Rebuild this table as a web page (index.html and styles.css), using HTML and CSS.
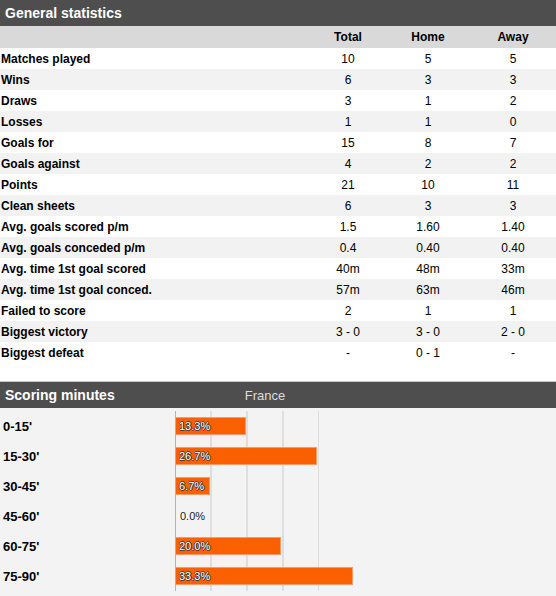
FILE: index.html
```html
<!DOCTYPE html>
<html>
<head>
<meta charset="utf-8">
<link rel="stylesheet" href="styles.css">
</head>
<body>
<div class="page">
  <div class="section-head"><span class="title">General statistics</span></div>
  <table class="stats">
    <colgroup><col class="c-label"><col class="c-total"><col class="c-home"><col class="c-away"></colgroup>
    <thead>
      <tr><th></th><th>Total</th><th>Home</th><th>Away</th></tr>
    </thead>
    <tbody>
      <tr><td>Matches played</td><td>10</td><td>5</td><td>5</td></tr>
      <tr><td>Wins</td><td>6</td><td>3</td><td>3</td></tr>
      <tr><td>Draws</td><td>3</td><td>1</td><td>2</td></tr>
      <tr><td>Losses</td><td>1</td><td>1</td><td>0</td></tr>
      <tr><td>Goals for</td><td>15</td><td>8</td><td>7</td></tr>
      <tr><td>Goals against</td><td>4</td><td>2</td><td>2</td></tr>
      <tr><td>Points</td><td>21</td><td>10</td><td>11</td></tr>
      <tr><td>Clean sheets</td><td>6</td><td>3</td><td>3</td></tr>
      <tr><td>Avg. goals scored p/m</td><td>1.5</td><td>1.60</td><td>1.40</td></tr>
      <tr><td>Avg. goals conceded p/m</td><td>0.4</td><td>0.40</td><td>0.40</td></tr>
      <tr><td>Avg. time 1st goal scored</td><td>40m</td><td>48m</td><td>33m</td></tr>
      <tr><td>Avg. time 1st goal conced.</td><td>57m</td><td>63m</td><td>46m</td></tr>
      <tr><td>Failed to score</td><td>2</td><td>1</td><td>1</td></tr>
      <tr><td>Biggest victory</td><td>3 - 0</td><td>3 - 0</td><td>2 - 0</td></tr>
      <tr><td>Biggest defeat</td><td>-</td><td>0 - 1</td><td>-</td></tr>
    </tbody>
  </table>

  <div class="scoring">
    <div class="scoring-head">
      <span class="title scoring-title">Scoring minutes</span>
      <span class="team">France</span>
    </div>
    <div class="scoring-body">
      <div class="labels">
        <div class="lbl">0-15'</div>
        <div class="lbl">15-30'</div>
        <div class="lbl">30-45'</div>
        <div class="lbl">45-60'</div>
        <div class="lbl">60-75'</div>
        <div class="lbl">75-90'</div>
      </div>
      <div class="chart">
        <div class="brow"><div class="bar" style="width:71px"><span class="val">13.3%</span></div></div>
        <div class="brow"><div class="bar" style="width:142px"><span class="val">26.7%</span></div></div>
        <div class="brow"><div class="bar" style="width:35px"><span class="val">6.7%</span></div></div>
        <div class="brow"><span class="zero">0.0%</span></div>
        <div class="brow"><div class="bar" style="width:106px"><span class="val">20.0%</span></div></div>
        <div class="brow"><div class="bar" style="width:178px"><span class="val">33.3%</span></div></div>
      </div>
    </div>
  </div>
</div>
</body>
</html>
```
FILE: styles.css
```css
html, body {
  margin: 0;
  padding: 0;
  background: #ffffff;
}
body {
  font-family: "Liberation Sans", Arial, sans-serif;
  font-size: 12px;
  color: #000;
}
.page {
  width: 556px;
}
.section-head {
  height: 26px;
  background: #4e4e4e;
  display: flex;
  align-items: center;
  padding-left: 5px;
}
.title {
  color: #fff;
  font-weight: bold;
  font-size: 14px;
}
.stats {
  width: 556px;
  border-collapse: collapse;
  table-layout: fixed;
}
.c-label { width: 310px; }
.c-total { width: 76px; }
.c-home { width: 84px; }
.c-away { width: 86px; }
.stats thead tr {
  background: #d9d9d9;
  height: 22px;
}
.stats th {
  font-weight: bold;
  font-size: 12px;
  text-align: center;
  padding: 0;
}
.stats tbody tr {
  height: 21px;
}
.stats tbody tr:nth-child(even) {
  background: #f2f2f2;
}
.stats td {
  padding: 0;
  text-align: center;
  font-size: 12px;
}
.stats td:first-child {
  text-align: left;
  font-weight: bold;
  padding-left: 1px;
}
.scoring {
  margin-top: 18px;
  border-top: 1px solid #c8c8c8;
}
.scoring-head {
  height: 26px;
  background: #4e4e4e;
  display: grid;
  grid-template-columns: 175px 180px;
  align-items: center;
}
.scoring-title {
  padding-left: 5px;
}
.team {
  color: #dcdcdc;
  font-size: 13px;
  text-align: center;
}
.scoring-body {
  background: #f3f3f3;
  display: grid;
  grid-template-columns: 175px 1fr;
  padding-top: 3px;
  padding-bottom: 5px;
}
.lbl {
  height: 30px;
  display: flex;
  align-items: center;
  padding-left: 3px;
  font-weight: bold;
  font-size: 13px;
}
.chart {
  border-left: 1px solid #b4b4b4;
  background-image: repeating-linear-gradient(to right, transparent 0, transparent 34px, #dedede 34px, #dedede 36px);
  background-size: 143px 100%;
  background-repeat: no-repeat;
}
.brow {
  height: 30px;
  display: flex;
  align-items: center;
  margin-left: -1px;
}
.bar {
  height: 18px;
  box-sizing: border-box;
  background: #fa6000;
  border: 1px solid #fb9a62;
  display: flex;
  align-items: center;
  padding-left: 3px;
  white-space: nowrap;
}
.val {
  color: #fff;
  font-size: 11px;
  text-shadow: 1px 0 0 #3a3a3a, -1px 0 0 #3a3a3a, 0 1px 0 #3a3a3a, 0 -1px 0 #3a3a3a;
}
.zero {
  padding-left: 5px;
  font-size: 11px;
  color: #222;
}
```
